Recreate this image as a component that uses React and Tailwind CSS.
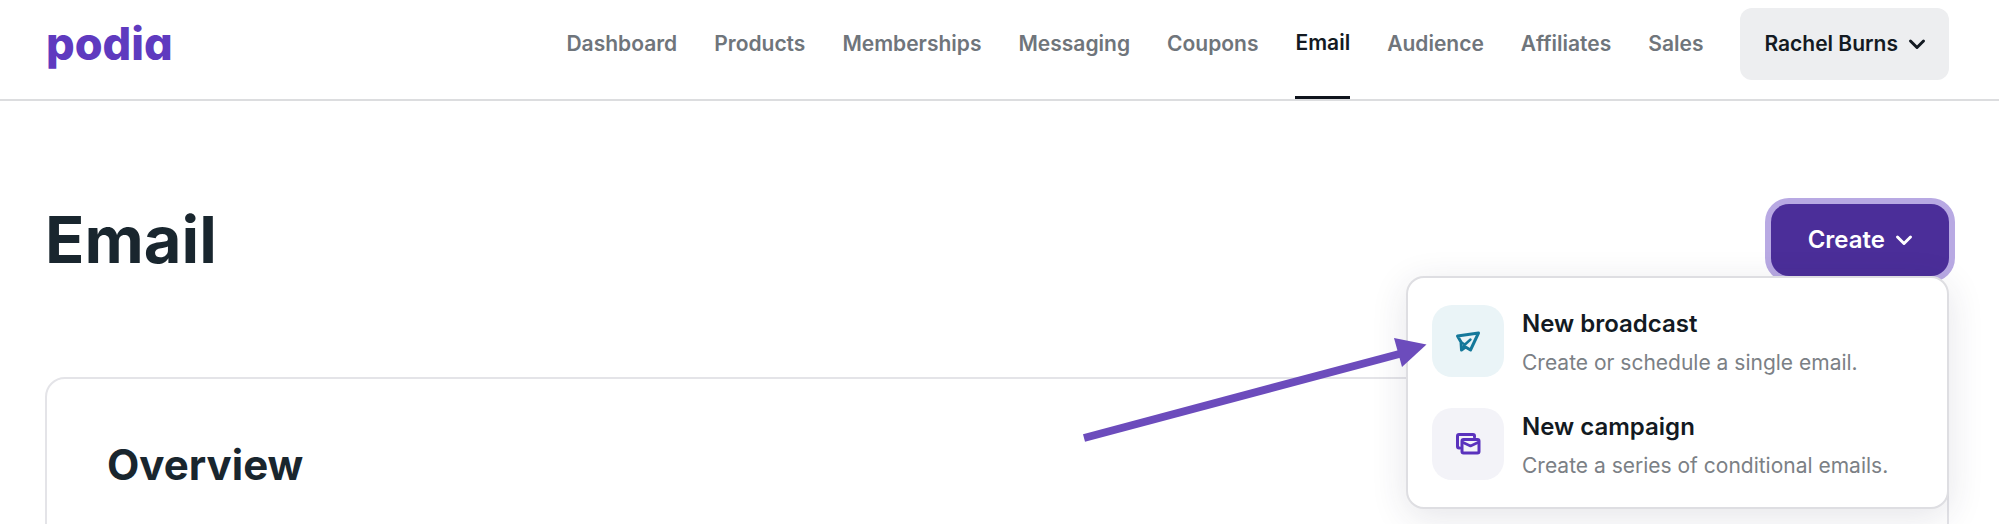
import React, { useState } from 'react';

const NAV_ITEMS = [
  'Dashboard',
  'Products',
  'Memberships',
  'Messaging',
  'Coupons',
  'Email',
  'Audience',
  'Affiliates',
  'Sales',
];

const Chevron = () => (
  <svg width="18" height="18" viewBox="0 0 18 18" fill="none" stroke="currentColor" strokeWidth="3" strokeLinecap="round" strokeLinejoin="round" aria-hidden="true">
    <path d="M2.500 6 9 12.500l6.500-6.500" />
  </svg>
);

const BroadcastIcon = () => (
  <svg width="26" height="26" viewBox="0 0 26 26" fill="none" stroke="currentColor" strokeWidth="3" strokeLinecap="round" strokeLinejoin="round" aria-hidden="true">
    <path d="M2.500 8 23.500 5 15.500 22 10.500 19 6.500 22 6 14Z" />
    <path d="M6.500 14.500 10 16.500 15.500 11.500M10 16.500 7.500 20" strokeWidth="2.400" />
  </svg>
);

const CampaignIcon = () => (
  <svg width="26" height="26" viewBox="0 0 26 26" fill="none" stroke="currentColor" strokeWidth="3" strokeLinecap="round" strokeLinejoin="round" aria-hidden="true">
    <path d="M5 17H4a1.500 1.500 0 0 1-1.500-1.500V5A1.500 1.500 0 0 1 4 3.500h14A1.500 1.500 0 0 1 19.500 5v1" />
    <rect x="7" y="8.500" width="17" height="13.500" rx="1.500" />
    <path d="M8 11.500 15.500 15 23 11.500" strokeWidth="2.600" />
  </svg>
);

const MENU_ITEMS = [
  {
    title: 'New broadcast',
    text: 'Create or schedule a single email.',
    icon: <BroadcastIcon />,
    tile: 'bg-[#eaf4f7] text-[#14789a]',
  },
  {
    title: 'New campaign',
    text: 'Create a series of conditional emails.',
    icon: <CampaignIcon />,
    tile: 'bg-[#f3f3f8] text-[#5a32bd]',
  },
];

const Header = () => (
  <header className="flex h-[101px] justify-between border-b-2 border-[#dcdddf] pl-[46px] pr-[50px]">
    <a href="#" className="flex items-center pb-3 text-[45px] font-extrabold leading-none text-[#5f3abf] [font-feature-settings:'cv11']">
      podia
    </a>
    <div className="flex">
      <nav className="flex gap-[37px]">
        {NAV_ITEMS.map((item) => (
          <a
            key={item}
            href="#"
            className={
              item === 'Email'
                ? 'flex items-center border-b-[3px] border-[#0f141c] pb-[11px] text-[21px] font-semibold text-[#131a22]'
                : 'flex items-center pb-[11px] text-[21px] font-semibold text-[#6f757b]'
            }
          >
            {item}
          </a>
        ))}
      </nav>
      <button type="button" className="ml-[37px] mt-2 flex h-[72px] items-center gap-2.5 rounded-xl bg-[#edeef0] pl-6 pr-[23px] text-[21px] font-semibold text-[#131a22]">
        Rachel Burns
        <Chevron />
      </button>
    </div>
  </header>
);

const CreateMenu = () => (
  <div className="absolute right-0 top-full w-[543px] rounded-[18px] border-2 border-[#dedee2] bg-white px-6 py-[27px] shadow-[0_8px_36px_rgba(40,40,70,0.12)]">
    <ul className="flex flex-col gap-[31px]">
      {MENU_ITEMS.map((item) => (
        <li key={item.title}>
          <button type="button" className="flex w-full items-center gap-[18px] text-left">
            <span className={`flex size-[72px] shrink-0 items-center justify-center rounded-[20px] ${item.tile}`}>
              {item.icon}
            </span>
            <span className="flex flex-col gap-2.5 whitespace-nowrap pt-1">
              <span className="text-[24px] font-semibold leading-[30px] text-[#131a22]">{item.title}</span>
              <span className="text-[21px] leading-[28px] text-[#7b8085]">{item.text}</span>
            </span>
          </button>
        </li>
      ))}
    </ul>
    {/* arrow pointing at the broadcast option */}
    <svg className="pointer-events-none absolute -left-[325px] top-[60px]" width="346" height="106" viewBox="0 0 346 106" aria-hidden="true">
      <path d="M1 100 320 15" stroke="#6c4cbc" strokeWidth="8" />
      <path d="M311 0 343.500 6.500 319 29Z" fill="#6c4cbc" />
    </svg>
  </div>
);

const App = () => {
  const [open, setOpen] = useState(true);

  return (
    <div className="h-screen overflow-hidden bg-white font-['Inter',sans-serif]">
      <Header />
      <main className="pl-[45px] pr-[50px] pt-[103px]">
        <div className="flex items-center justify-between">
          <h1 className="text-[65px] font-bold leading-[72px] text-[#19262e]">Email</h1>
          <div className="relative">
            <button
              type="button"
              aria-expanded={open}
              onClick={() => setOpen(!open)}
              className="flex h-[72px] items-center gap-2.5 rounded-[18px] bg-[#4b2e99] pl-[37px] pr-9 text-[24px] font-semibold text-white ring-6 ring-[#b8a9e3]"
            >
              Create
              <Chevron />
            </button>
            {open && <CreateMenu />}
          </div>
        </div>

        <section className="mt-[101px] min-h-[300px] rounded-[20px] border-2 border-[#e4e4e8] p-[60px]">
          <h2 className="text-[42px] font-bold leading-[52px] text-[#19262e]">Overview</h2>
        </section>
      </main>
    </div>
  );
};

export default App;
